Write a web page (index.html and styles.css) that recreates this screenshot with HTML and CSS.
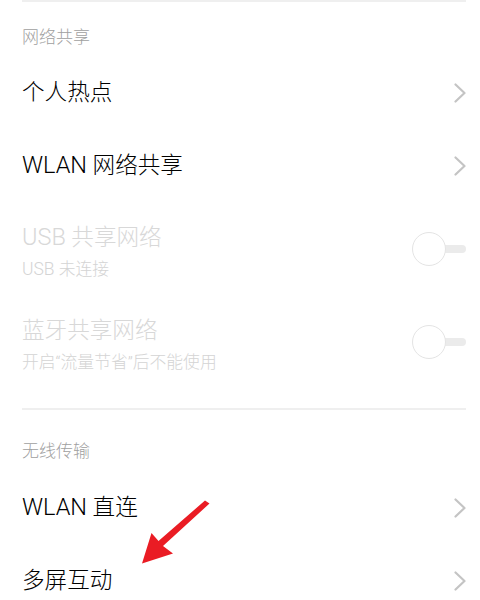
FILE: index.html
```html
<!DOCTYPE html>
<html lang="zh-CN">
<head>
<meta charset="utf-8">
<link rel="stylesheet" href="styles.css">
</head>
<body>
<div class="page">
  <div class="rule"></div>
  <section class="section">
    <div class="header">网络共享</div>
    <div class="row">
      <span class="title">个人热点</span>
      <svg class="chev" viewBox="0 0 12 20"><polyline points="1.5,1.5 10.5,10 1.5,18.5"/></svg>
    </div>
    <div class="row">
      <span class="title"><span class="lat">WLAN</span> 网络共享</span>
      <svg class="chev" viewBox="0 0 12 20"><polyline points="1.5,1.5 10.5,10 1.5,18.5"/></svg>
    </div>
    <div class="row row-double disabled">
      <div class="texts">
        <div class="title"><span class="lat">USB</span> 共享网络</div>
        <div class="sub"><span class="lat">USB</span> 未连接</div>
      </div>
      <svg class="toggle" viewBox="0 0 56 36"><rect x="30" y="14" width="25" height="8" rx="4"/><circle cx="18" cy="18" r="16.5"/></svg>
    </div>
    <div class="row row-double disabled">
      <div class="texts">
        <div class="title">蓝牙共享网络</div>
        <div class="sub">开启“流量节省”后不能使用</div>
      </div>
      <svg class="toggle" viewBox="0 0 56 36"><rect x="30" y="14" width="25" height="8" rx="4"/><circle cx="18" cy="18" r="16.5"/></svg>
    </div>
  </section>
  <div class="rule"></div>
  <section class="section">
    <div class="header header-second">无线传输</div>
    <div class="row">
      <span class="title"><span class="lat">WLAN</span> 直连</span>
      <svg class="chev" viewBox="0 0 12 20"><polyline points="1.5,1.5 10.5,10 1.5,18.5"/></svg>
    </div>
    <div class="row">
      <span class="title">多屏互动</span>
      <svg class="chev" viewBox="0 0 12 20"><polyline points="1.5,1.5 10.5,10 1.5,18.5"/></svg>
    </div>
  </section>
  <svg class="arrow" viewBox="0 0 480 600"><polygon points="205,500.5 209.5,503.5 163,546 173,553.5 142,563.5 151.5,533 158.5,541"/></svg>
</div>
</body>
</html>
```
FILE: styles.css
```css
html, body {
  margin: 0;
  padding: 0;
  background: #ffffff;
}
.page {
  position: relative;
  width: 480px;
  height: 600px;
  overflow: hidden;
  font-family: Roboto, "Noto Sans CJK SC", sans-serif;
  font-weight: 300;
}
.lat {
  font-size: 1.04em;
  line-height: 1;
}
.rule {
  height: 2px;
  margin: 0 14px 0 22px;
  background: #efefef;
}
.section {
  padding: 0 14px 0 22px;
}
.section:first-of-type {
  padding-bottom: 19px;
}
.header {
  height: 54.5px;
  display: flex;
  align-items: flex-end;
  padding-bottom: 8px;
  box-sizing: border-box;
  font-size: 17px;
  line-height: 24px;
  color: #a0a0a0;
}
.header-second {
  height: 61.5px;
}
.row {
  height: 73px;
  display: flex;
  align-items: center;
  justify-content: space-between;
}
.row-double {
  height: 93px;
}
.title {
  font-size: 22.6px;
  line-height: 30px;
  color: #000000;
}
.texts {
  margin-top: 6px;
}
.sub {
  font-size: 16.8px;
  line-height: 26px;
  margin-top: 3px;
  color: #d4d4d4;
}
.disabled .title {
  color: #d8d8d8;
}
.chev {
  width: 12px;
  height: 20px;
  fill: none;
  stroke: #c4c4c4;
  stroke-width: 2.2;
  stroke-linecap: round;
  stroke-linejoin: round;
}
.toggle {
  width: 56px;
  height: 36px;
  margin-right: -1px;
}
.toggle rect {
  fill: #ebebeb;
}
.toggle circle {
  fill: #ffffff;
  stroke: #e4e4e4;
  stroke-width: 1;
}
.arrow {
  position: absolute;
  left: 0;
  top: 0;
  width: 480px;
  height: 600px;
  pointer-events: none;
}
.arrow polygon {
  fill: #ea1c24;
}
```
